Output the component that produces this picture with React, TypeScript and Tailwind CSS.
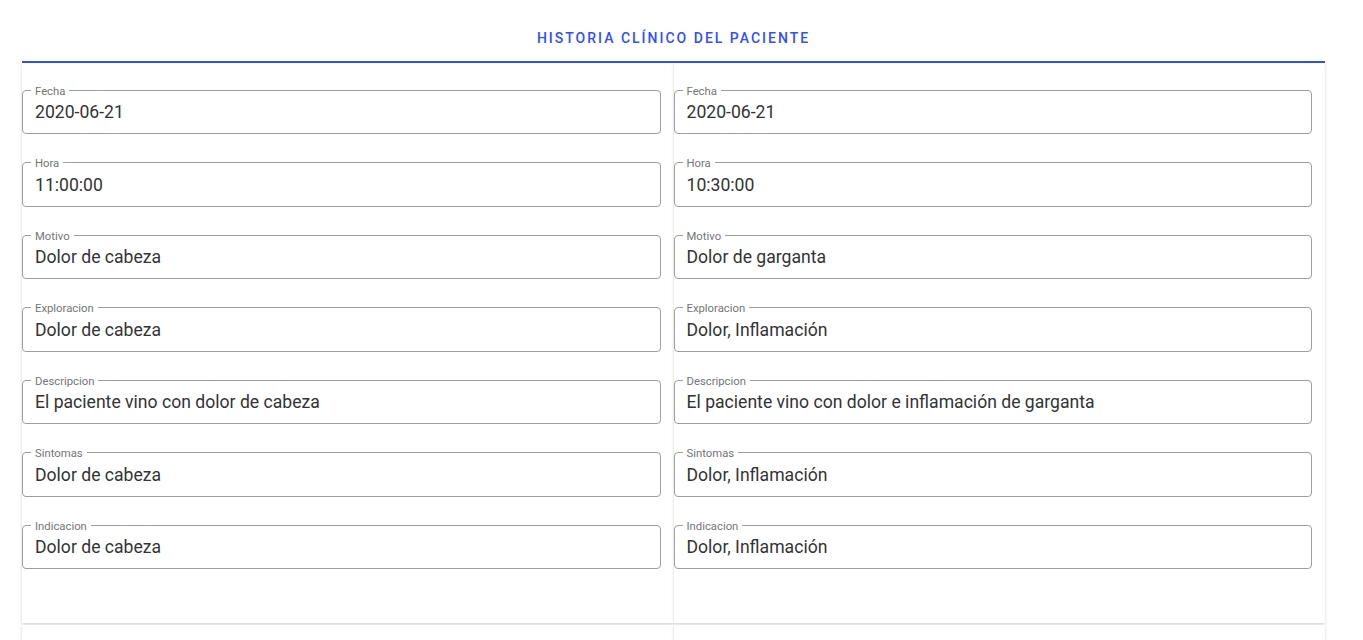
const visitas = [
  {
    Fecha: "2020-06-21",
    Hora: "11:00:00",
    Motivo: "Dolor de cabeza",
    Exploracion: "Dolor de cabeza",
    Descripcion: "El paciente vino con dolor de cabeza",
    Sintomas: "Dolor de cabeza",
    Indicacion: "Dolor de cabeza",
  },
  {
    Fecha: "2020-06-21",
    Hora: "10:30:00",
    Motivo: "Dolor de garganta",
    Exploracion: "Dolor, Inflamación",
    Descripcion: "El paciente vino con dolor e inflamación de garganta",
    Sintomas: "Dolor, Inflamación",
    Indicacion: "Dolor, Inflamación",
  },
];

function Campo({ label, value }: { label: string; value: string }) {
  return (
    <fieldset className="border border-[#9e9e9e] rounded-[4px] px-[8px] pt-[2.5px] pb-[9px] m-0 min-w-0">
      <legend className="px-[4px] pt-[3px] text-[11.3px] leading-[12px] text-[#757575]">{label}</legend>
      <div className="pl-[4px] text-[17.6px] leading-[24px] text-[#333333]">{value}</div>
    </fieldset>
  );
}

function Tarjeta({ visita }: { visita: Record<string, string> }) {
  return (
    <div className="bg-white shadow-[0_1px_3px_rgba(0,0,0,0.18)] pt-[19.5px] pb-[54px] pr-[13px] flex flex-col gap-[21px]">
      {Object.entries(visita).map(([k, v]) => (
        <Campo key={k} label={k} value={v} />
      ))}
    </div>
  );
}

export default function App() {
  return (
    <div className="min-h-screen bg-white font-['Roboto',sans-serif]">
      <div className="ml-[22px] w-[1303px]">
        <div className="h-[63px] pt-[28px] border-b-2 border-[#304ffe] text-center">
          <h2 className="text-[14px] leading-[20px] font-medium tracking-[2px] text-[#304ffe]">
            HISTORIA CLÍNICO DEL PACIENTE
          </h2>
        </div>
        <div className="grid grid-cols-2 gap-y-[2px]">
          {visitas.map((v, i) => (
            <Tarjeta key={i} visita={v} />
          ))}
          {visitas.map((v, i) => (
            <Tarjeta key={"b" + i} visita={v} />
          ))}
        </div>
      </div>
    </div>
  );
}
